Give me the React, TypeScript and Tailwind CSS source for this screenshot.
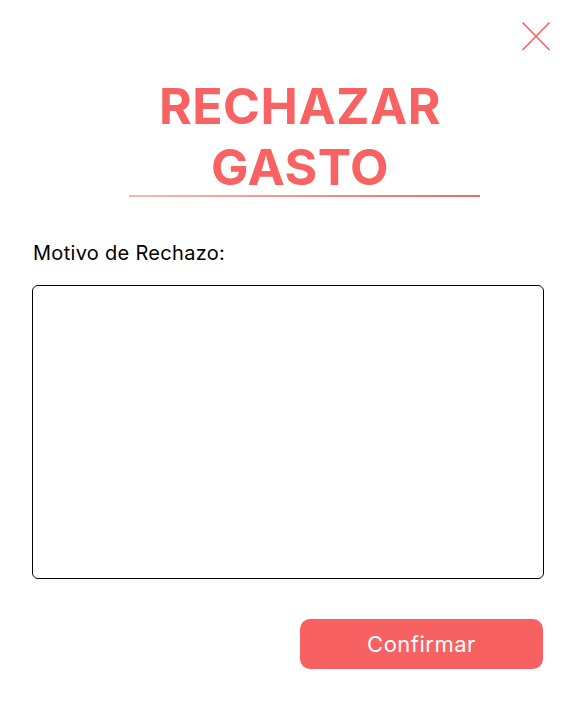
import React, { useState } from "react";

const RejectExpense: React.FC = () => {
  const [reason, setReason] = useState("");

  return (
    <div className="relative w-[575px] h-[706px] bg-white font-['Inter',sans-serif]">
      <button className="absolute top-[21px] right-[24px] text-[#f86262]" aria-label="Cerrar">
        <svg width="30" height="30" viewBox="0 0 30 30" fill="none" stroke="currentColor" strokeWidth="1.6">
          <path d="M1.5 1.5 28.5 29M28.5 1.5 1.5 29" />
        </svg>
      </button>

      <div className="flex flex-col items-center pt-[76px] pl-[25px]">
        <h1 className="text-center text-[50px] leading-[61px] font-bold tracking-[0.5px] text-[#f86262]">
          RECHAZAR
          <br />
          GASTO
        </h1>
        <div className="-mt-[3px] ml-[8px] h-[2px] w-[351px] bg-gradient-to-r from-[#f7b5b5] to-[#e86a6a]" />
      </div>

      <div className="px-[32px] pt-[43px]">
        <label htmlFor="reason" className="block pl-[1px] text-[20px] leading-[26px] font-normal tracking-[0.3px] text-black">
          Motivo de Rechazo:
        </label>
        <textarea
          id="reason"
          value={reason}
          onChange={(e) => setReason(e.target.value)}
          className="mt-[19px] block h-[294px] w-[512px] resize-none rounded-[6px] border border-black p-3 focus:outline-none"
        />
        <div className="mt-[40px] flex justify-end">
          <button className="h-[50px] w-[243px] rounded-[10px] bg-[#f76161] text-[22px] font-normal tracking-[0.5px] text-white">
            Confirmar
          </button>
        </div>
      </div>
    </div>
  );
};

export default function App() {
  return <RejectExpense />;
}
